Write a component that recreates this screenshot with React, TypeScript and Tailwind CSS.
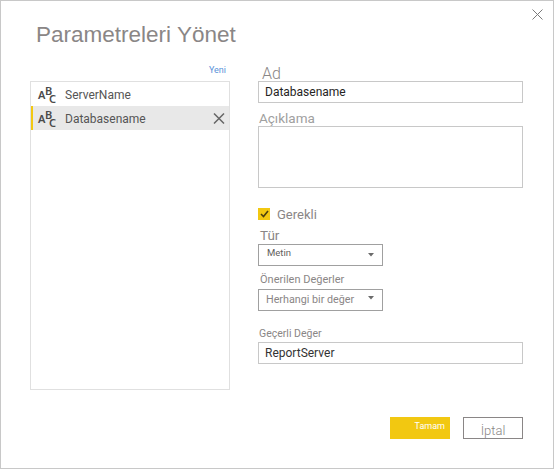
export default function App() {
  const ABC = () => (
    <span className="relative block w-[17px] h-[17px] shrink-0 text-[#4a4a4a] font-['Noto_Sans',sans-serif] font-semibold text-[11px] leading-[8px]">
      <span className="absolute left-0 top-[5px] h-[8px]">A</span>
      <span className="absolute left-[7px] top-[1px] h-[8px]">B</span>
      <span className="absolute left-[11px] top-[9px] h-[8px]">C</span>
    </span>
  );
  const Caret = () => (
    <svg width="6" height="4" viewBox="0 0 6 4" className="shrink-0"><path d="M0 0h6L3 3.5z" fill="#6b6b6b" /></svg>
  );
  return (
    <div className="w-[554px] h-[469px] bg-white border border-[#c8c8c8] overflow-hidden relative font-['Roboto',sans-serif]">
      <svg width="11" height="11" viewBox="0 0 11 11" className="absolute left-[531px] top-[8px]" fill="none" stroke="#7a7a7a" strokeWidth="1">
        <path d="M0.5 0.5L10.5 10.5M10.5 0.5L0.5 10.5" />
      </svg>
      <h1 className="ml-[35px] pt-[19px] h-[60px] text-[22.5px] leading-[30px] text-[#8a8686] font-['Liberation_Sans',sans-serif] font-normal">
        Parametreleri Yönet
      </h1>
      <div className="flex">
        <div className="ml-[29px] w-[200px] shrink-0">
          <div className="h-[20px] flex justify-end pr-[4px] text-[9px] leading-[18px] text-[#5b93d9]">Yeni</div>
          <div className="h-[309px] border border-[#e0e0e0]">
            <div className="h-[24px] flex items-center pl-[7px] gap-[10px] text-[12px] text-[#555555]">
              <ABC />
              <span className="pt-[2px]">ServerName</span>
            </div>
            <div className="h-[24px] flex items-center pl-[5px] gap-[10px] text-[12px] text-[#555555] bg-[#e8e8e8] border-l-2 border-[#f2c811] pr-[4px]">
              <ABC />
              <span className="flex-1 pt-[2px]">Databasename</span>
              <svg width="12" height="11" viewBox="0 0 12 11" fill="none" stroke="#666666" strokeWidth="1.5"><path d="M1 0.5L11 10.5M11 0.5L1 10.5" /></svg>
            </div>
          </div>
        </div>
        <div className="ml-[28px] w-[265px] shrink-0 pt-[6px]">
          <div className="ml-[4px] text-[16px] leading-[14px] font-light text-[#8a8686]">Ad</div>
          <div className="h-[22px] border border-[#c8c8c8] pl-[6px] text-[12px] leading-[21px] text-[#252423]">Databasename</div>
          <div className="mt-[8px] ml-[1px] text-[13.5px] leading-[14px] text-[#a0a0a0]">Açıklama</div>
          <div className="h-[62px] mt-[1px] border border-[#c8c8c8]" />
          <div className="mt-[19px] flex items-center h-[14px]">
            <span className="w-[12px] h-[12px] bg-[#f2c811] flex items-center justify-center">
              <svg width="9" height="8" viewBox="0 0 9 8" fill="none" stroke="#4a3f10" strokeWidth="1.6"><path d="M1 4l2.5 2.5L8 1" /></svg>
            </span>
            <span className="ml-[7px] pt-[2px] text-[13px] leading-[14px] text-[#8a8686]">Gerekli</span>
          </div>
          <div className="mt-[6px] ml-[2px] text-[13.5px] leading-[16px] text-[#8a8686]">Tür</div>
          <div className="mt-[1px] w-[125px] h-[22px] border border-[#a0a0a0] flex justify-between pl-[8px] pr-[8px] pt-[2px]">
            <span className="text-[9.5px] leading-[12px] text-[#605e5c]">Metin</span>
            <span className="pt-[6px]"><Caret /></span>
          </div>
          <div className="mt-[6px] ml-[2px] text-[11px] leading-[16px] text-[#8a8686]">Önerilen Değerler</div>
          <div className="mt-[1px] w-[125px] h-[22px] border border-[#a0a0a0] flex items-center justify-between pl-[7px] pr-[8px]">
            <span className="text-[10.75px] leading-[20px] text-[#8a8686]">Herhangi bir değer</span>
            <span className="pb-[5px]"><Caret /></span>
          </div>
          <div className="mt-[15px] ml-[1px] text-[10.5px] leading-[16px] text-[#8a8686]">Geçerli Değer</div>
          <div className="h-[22px] border border-[#c8c8c8] pl-[6px] text-[12px] leading-[21px] text-[#333333]">ReportServer</div>
          <div className="mt-[53px] ml-[132px] flex gap-[13px]">
            <div className="w-[60px] h-[22px] bg-[#f2c811] text-white text-[9px] leading-[18px] text-right pr-[5px]">Tamam</div>
            <div className="w-[60px] h-[22px] border border-[#8a8686] text-[#8a8686] text-[13px] leading-[25px] text-center font-light">İptal</div>
          </div>
        </div>
      </div>
    </div>
  );
}
